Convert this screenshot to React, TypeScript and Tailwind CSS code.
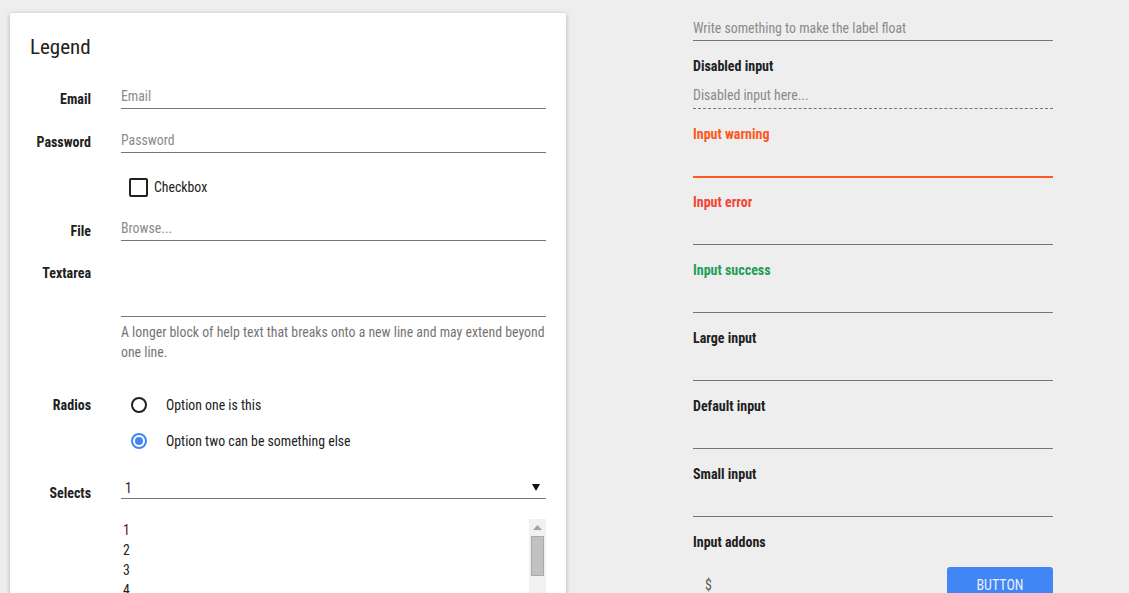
import React from 'react';

const font = "font-['Roboto_Condensed','Liberation_Sans_Narrow','Roboto',sans-serif]";

function Row({ label, children, labelPad = 'pt-[2px]', className = '' }: { label?: string; children: React.ReactNode; labelPad?: string; className?: string }) {
  return (
    <div className={`flex items-start ${className}`}>
      <div className={`w-[61px] h-6 shrink-0 text-right text-[14px] font-bold leading-6 text-[#212121] whitespace-nowrap ${labelPad}`}>{label}</div>
      <div className="ml-[30px] w-[425px]">{children}</div>
    </div>
  );
}

function Underlined({ placeholder, h = 'h-6' }: { placeholder?: string; h?: string }) {
  return (
    <div className={`${h} border-b border-[#757575] pt-px text-[13.8px] leading-5 text-[#8a8a8a]`}>{placeholder}</div>
  );
}

function Group({ label, color = 'text-[#212121]', children, className = 'mt-[15px]', gap = 'pt-2' }: { label: string; color?: string; children: React.ReactNode; className?: string; gap?: string }) {
  return (
    <div className={className}>
      <div className={`h-5 text-[14px] font-bold leading-5 ${color}`}>{label}</div>
      <div className={gap}>{children}</div>
    </div>
  );
}

export default function App() {
  return (
    <div className={`min-h-screen bg-[#eeeeee] flex items-start ${font}`}>
      {/* Left card */}
      <div className="ml-[10px] mt-[13px] w-[556px] h-[620px] bg-white rounded-[2px] shadow-[0_1px_5px_rgba(0,0,0,0.25)] pl-[20px] pt-[20px]">
        <div className="text-[21px] leading-7 text-[#212121]">Legend</div>

        <Row label="Email" className="mt-[24px]">
          <Underlined placeholder="Email" />
        </Row>
        <Row label="Password" className="mt-[20px]" labelPad="pt-px">
          <Underlined placeholder="Password" />
        </Row>
        <Row className="mt-[25px]">
          <div className="flex items-center h-[19px] pl-[8px]">
            <div className="w-[19px] h-[19px] border-2 border-[#212121] rounded-[2px]" />
            <span className="ml-[6px] text-[13.8px] text-[#212121]">Checkbox</span>
          </div>
        </Row>
        <Row label="File" className="mt-[15px]">
          <Underlined placeholder="Browse..." />
        </Row>
        <Row label="Textarea" className="mt-[18px]">
          <Underlined h="h-[58px]" />
        </Row>
        <Row className="mt-[5px]" labelPad="">
          <p className="w-[432px] text-[13.8px] leading-5 text-[#757575]">
            A longer block of help text that breaks onto a new line and may extend beyond one line.
          </p>
        </Row>
        <Row label="Radios" className="mt-[31px]" labelPad="">
          <div className="flex flex-col gap-3">
            <div className="flex items-center h-6 pl-[10px]">
              <div className="w-[16px] h-[16px] rounded-full border-2 border-[#212121]" />
              <span className="ml-[19px] text-[13.8px] text-[#212121]">Option one is this</span>
            </div>
            <div className="flex items-center h-6 pl-[10px]">
              <div className="w-[16px] h-[16px] rounded-full border-2 border-[#4285f4] flex items-center justify-center">
                <div className="w-[8px] h-[8px] rounded-full bg-[#4285f4]" />
              </div>
              <span className="ml-[19px] text-[13.8px] text-[#212121]">Option two can be something else</span>
            </div>
          </div>
        </Row>
        <Row label="Selects" className="mt-[21px]" labelPad="pt-[7px]">
          <div className="h-[25px] border-b border-[#757575] flex items-start justify-between pt-[4px] pl-[4px] pr-[6px] text-[13.8px] leading-5 text-[#3a1a3a]">
            <span>1</span>
            <svg className="mt-[6px]" width="8" height="7" viewBox="0 0 8 7"><path d="M0 0h8L4 7z" fill="#111" /></svg>
          </div>
          <div className="mt-[20px] h-[80px] flex">
            <div className="flex-1 pt-px pl-[2px] text-[13.8px] leading-5 text-[#212121]">
              <div className="text-[#5a1515]">1</div>
              <div>2</div>
              <div>3</div>
              <div>4</div>
            </div>
            <div className="w-[17px] bg-[#f1f1f1] flex flex-col items-center">
              <svg className="mt-[6px]" width="9" height="5" viewBox="0 0 9 5"><path d="M0 5L4.5 0 9 5z" fill="#a3a3a3" /></svg>
              <div className="mt-[6px] w-[13px] h-[40px] bg-[#c1c1c1] border border-[#a9a9a9]" />
              <div className="mt-auto w-[7px] h-[2px] bg-[#505050]" />
            </div>
          </div>
        </Row>
      </div>

      {/* Right column */}
      <div className="ml-[127px] mt-[16px] w-[360px]">
        <div className="h-[25px] border-b border-[#757575] pt-[2px] text-[13.8px] leading-5 text-[#8a8a8a]">Write something to make the label float</div>

        <Group label="Disabled input">
          <div className="h-[25px] border-b border-dashed border-[#757575] pt-px text-[13.8px] leading-5 text-[#8a8a8a]">Disabled input here...</div>
        </Group>
        <Group label="Input warning" color="text-[#ff5722]">
          <div className="h-[26px] border-b-2 border-[#ff5722]" />
        </Group>
        <Group label="Input error" color="text-[#f44336]" className="mt-[14px]">
          <div className="h-[25px] border-b border-[#757575]" />
        </Group>
        <Group label="Input success" color="text-[#1e9e58]">
          <div className="h-[25px] border-b border-[#757575]" />
        </Group>
        <Group label="Large input">
          <div className="h-[25px] border-b border-[#757575]" />
        </Group>
        <Group label="Default input">
          <div className="h-[25px] border-b border-[#757575]" />
        </Group>
        <Group label="Small input">
          <div className="h-[25px] border-b border-[#757575]" />
        </Group>
        <Group label="Input addons" gap="pt-[15px]">
          <div className="flex items-center">
            <span className="pl-[12px] text-[13.8px] text-[#555]">$</span>
            <div className="flex-1" />
            <button className="w-[106px] h-[36px] rounded-[3px] bg-[#4285f4] text-[14px] text-[#e8f0fe] uppercase">Button</button>
          </div>
        </Group>
      </div>
    </div>
  );
}
